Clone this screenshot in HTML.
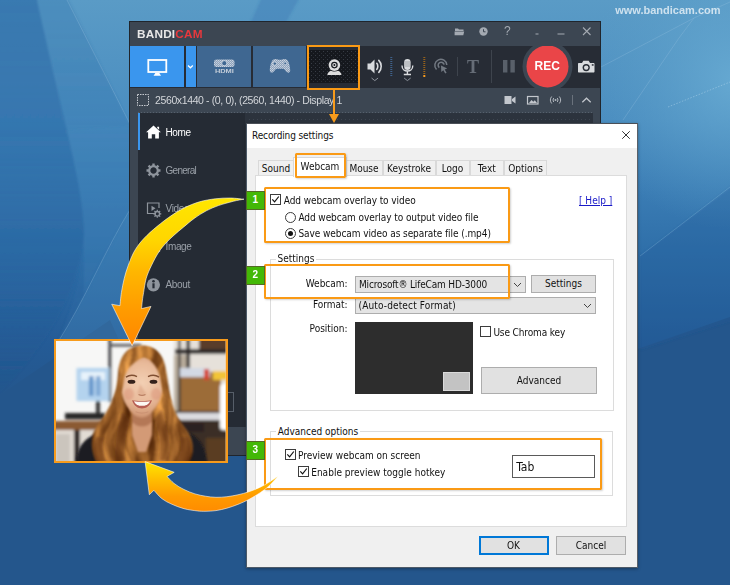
<!DOCTYPE html>
<html lang="en">
<head>
<meta charset="utf-8">
<title>Bandicam - Webcam overlay settings</title>
<style>
*{box-sizing:border-box;margin:0;padding:0}
html,body{width:730px;height:585px;overflow:hidden;background:#24568c}
body{position:relative;font-family:"Liberation Sans",sans-serif;font-size:10px;color:#000}
.abs{position:absolute}
#bg{position:absolute;left:0;top:0;width:730px;height:585px}
#wm{position:absolute;left:600px;top:4px;width:120.500px;text-align:right;font:bold 11px "Liberation Sans",sans-serif;color:rgba(255,255,255,.7);letter-spacing:0;white-space:nowrap}
/* ---------- Bandicam main window ---------- */
#win{position:absolute;left:129px;top:21px;width:472px;height:435px;background:#3c4652;border:1px solid #20252c;overflow:hidden}
#win .t{position:absolute;white-space:nowrap}
#logo{position:absolute;left:7.200px;top:6.300px;font:bold 10.500px "Liberation Sans",sans-serif;color:#e8e8e8;letter-spacing:.2px;transform-origin:0 50%;transform:scaleX(1.12);white-space:nowrap}
#logo b{color:#e8383d}
#tool{position:absolute;left:0;top:24px;width:471px;height:42px;background:#272c35}
.tb{position:absolute;top:0;height:41px}
#side{position:absolute;left:8px;top:91px;width:107px;height:314px;background:#252b34}
#cont{position:absolute;left:115px;top:91px;width:348px;height:314px;background:#2c333d}
.si{position:absolute;left:27.500px;margin-top:.5px;font-size:10px;color:#9aa0a8;white-space:nowrap;letter-spacing:-.35px}
/* ---------- dialog ---------- */
#dlg{position:absolute;left:246px;top:123px;width:392px;height:445px;background:#f0f0f0;border-top:1px solid #4a4f57;border-right:1px solid #5a6068;box-shadow:0 1px 3px rgba(0,0,0,.35),inset 1px 0 0 #4d5a68,inset 0 -1px 0 #4d5a68;font-family:"DejaVu Sans Condensed","Liberation Sans",sans-serif;font-size:10px;color:#111}
#dlg .t{position:absolute;white-space:nowrap;line-height:12px;margin-top:.6px}
#dtitle{position:absolute;left:0;top:0;width:391px;height:24px;background:#fff;box-shadow:inset 1px 0 0 #4d5a68}
.tab{position:absolute;top:36px;height:17px;border:1px solid #d9d9d9;border-bottom:none;background:#f0f0f0;text-align:center;line-height:15px;white-space:nowrap}
#pane{position:absolute;left:9px;top:51px;width:372px;height:352px;background:#fff;border:1px solid #dcdcdc}
.grp{position:absolute;border:1px solid #dcdcdc}
.cb{position:absolute;width:11px;height:11px;border:1px solid #3c3c3c;background:#fff}
.rb{position:absolute;width:11px;height:11px;border:1px solid #3c3c3c;border-radius:50%;background:#fff}
.btn{position:absolute;background:#e1e1e1;border:1px solid #adadad;text-align:center;white-space:nowrap}
.combo{position:absolute;background:#e4e4e4;border:1px solid #adadad}
.ob{position:absolute;border:2px solid #fa9a15;box-shadow:1px 1px 2px rgba(0,0,0,.18)}
.bd{position:absolute;width:18.500px;height:18.500px;background:#43b806;border:1px solid rgba(90,80,50,.75);color:#fff;font:bold 10px "Liberation Sans",sans-serif;text-align:center;line-height:16.500px}
</style>
</head>
<body>
<!-- background -->
<svg id="bg" width="730" height="585" viewBox="0 0 730 585">
<defs>
<linearGradient id="g0" gradientUnits="userSpaceOnUse" x1="0" y1="0" x2="0" y2="400">
<stop offset="0" stop-color="#5a9bc6"/><stop offset=".3" stop-color="#4a8dc0"/><stop offset=".48" stop-color="#3a7cb4"/><stop offset=".64" stop-color="#2e6ea8"/><stop offset=".86" stop-color="#245b96"/><stop offset="1" stop-color="#24568c"/>
</linearGradient>
<linearGradient id="gl" gradientUnits="userSpaceOnUse" x1="0" y1="0" x2="0" y2="400">
<stop offset="0" stop-color="#2a6aa6" stop-opacity=".68"/><stop offset=".35" stop-color="#2a69a5" stop-opacity=".6"/><stop offset=".7" stop-color="#26609c" stop-opacity=".4"/><stop offset="1" stop-color="#24568c" stop-opacity="0"/>
</linearGradient>
<linearGradient id="gm" gradientUnits="userSpaceOnUse" x1="0" y1="0" x2="0" y2="330">
<stop offset="0" stop-color="#3a7bb1" stop-opacity=".4"/><stop offset="1" stop-color="#2d6ca6" stop-opacity=".25"/>
</linearGradient>
<radialGradient id="g1" cx="735" cy="80" r="150" gradientUnits="userSpaceOnUse">
<stop offset="0" stop-color="#68abd3" stop-opacity=".9"/><stop offset="1" stop-color="#5a9dc8" stop-opacity="0"/>
</radialGradient>
<filter id="bb" x="-10%" y="-10%" width="120%" height="120%"><feGaussianBlur stdDeviation="1.200"/></filter>
</defs>
<rect width="730" height="585" fill="#24568c"/>
<path d="M0 0H730V317L640 348L601 362H129L110 320L0 395Z" fill="url(#g0)"/>
<rect x="560" y="0" width="170" height="240" fill="url(#g1)"/>
<g filter="url(#bb)">
<path d="M-5 -5H36C48 50 60 100 67 130C76 170 84 205 84 235C80 290 45 350 -5 398Z" fill="url(#gl)"/>
<path d="M36 -5H66L131 126V210C110 250 85 300 58 342C75 300 84 270 84 235C84 205 76 170 67 130C60 100 48 50 36 -5Z" fill="url(#gm)"/>
<path d="M640 256L735 184V320L640 350Z" fill="#1f5896" opacity=".28"/>
<path d="M58 342C85 300 105 250 131 206L131 345Z" fill="#4d8fc2" opacity=".32"/>
<path d="M84 235C84 205 76 170 67 130L131 126V206C115 232 100 262 84 295Z" fill="#4d8fc2" opacity=".18"/>
<path d="M262 -3L300 -3L285 24L250 24Z" fill="#3f80b8" opacity=".5"/>
</g>
<g fill="none" stroke="#9cc6e2" stroke-opacity=".35" stroke-width=".8">
<path d="M66 -2L131 126"/>
<path d="M601 67L694 18L730 2"/>
<path d="M623 120L679 38L694 18"/>
<path d="M640 256L730 187"/>
<path d="M58 342C85 300 105 250 131 208"/>
</g>
<path d="M668 107L730 82" stroke="#c4e0f2" stroke-opacity=".5" stroke-width=".8" stroke-dasharray="1.500 1.500" fill="none"/>
</svg>
<div id="wm">www.bandicam.com</div>

<!-- Bandicam window -->
<div id="win">
<div id="logo">BANDI<b>CAM</b></div>
<!-- title bar icons -->
<svg class="abs" style="left:320px;top:0" width="151" height="24" viewBox="320 0 151 24">
<g fill="#a4aab2">
<path d="M325 6.5h3l1 1h4.5v1.5h-8.5zM324.6 9.6h9.6l-.9 3.6h-8.7z"/>
<circle cx="353.500" cy="9.500" r="4.200"/>
</g>
<path d="M353.5 7.2v2.6h2" stroke="#3c4652" stroke-width="1" fill="none"/>
<g stroke="#a4aab2" stroke-width="1.1" fill="none">
<path d="M405.5 12h3M427.5 12h7"/>
<path d="M453 5.5l7.5 7.5M460.500 5.500l-7.500 7.500"/>
</g>
</svg>
<div class="t" style="left:374px;top:2px;font-size:12px;color:#a4aab2">?</div>
<div id="tool">
<div class="tb" style="left:0;width:54px;background:#3a96ee"></div>
<div class="tb" style="left:56px;width:10px;background:#3a96ee"></div>
<div class="tb" style="left:67px;width:54px;background:#3f6791"></div>
<div class="tb" style="left:123px;width:53px;background:#3f6791"></div>
<div class="tb" style="left:179px;top:4px;width:49px;height:33px;background:#15181d"></div>
<svg class="abs" style="left:0;top:0" width="471" height="42" viewBox="0 0 471 42">
<defs>
<pattern id="hd" width="2" height="2" patternUnits="userSpaceOnUse"><rect width="2" height="2" fill="#8da2bc"/><rect width="1" height="1" fill="#c9d3df"/><rect x="1" y="1" width="1" height="1" fill="#b7c4d4"/></pattern>
<pattern id="dots" width="4" height="4" patternUnits="userSpaceOnUse"><rect x="1" y="1" width="1" height="1" fill="#383d45"/><rect x="3" y="3" width="1" height="1" fill="#2a2e35"/></pattern>
</defs>
<rect x="179" y="4" width="49" height="33" fill="url(#dots)"/>
<!-- monitor -->
<rect x="18.300" y="14" width="18" height="12" fill="none" stroke="#fff" stroke-width="1.800"/>
<path d="M25.300 27h4l1.700 2.800h-7.400z" fill="#fff"/>
<!-- chevron -->
<path d="M58 19.600l2.400 2.200 2.400-2.200" fill="none" stroke="#fff" stroke-width="1.300"/>
<!-- hdmi -->
<g fill="#b4c0cf">
<rect x="84" y="13.500" width="20.500" height="7.500" rx="2.500" fill="url(#hd)"/>
</g>
<circle cx="94.300" cy="17.200" r="2.600" fill="#3f6791" stroke="#d5dde6" stroke-width=".9"/>
<text x="94.400" y="27.400" text-anchor="middle" font-family="Liberation Sans,sans-serif" font-weight="bold" font-size="5.600" fill="#c3cdd9" textLength="19" lengthAdjust="spacingAndGlyphs">HDMI</text>
<!-- gamepad -->
<path d="M143.600 13.400c1.800-.7 3.600-.5 4.800.3h3.200c1.200-.8 3-1 4.800-.3 2.300 1 3.600 6.500 3.800 10.600.1 2.400-1.700 3.300-3.200 2.300-1.300-.9-2.300-3.100-3.800-3.500h-6.400c-1.500.4-2.500 2.600-3.800 3.500-1.500 1-3.300.1-3.200-2.300.2-4.100 1.500-9.600 3.800-10.600z" fill="url(#hd)"/>
<circle cx="144.800" cy="17.600" r="1.700" fill="#3f6791" stroke="#c9d3df" stroke-width=".8"/>
<circle cx="155.200" cy="17.400" r="1.300" fill="#3f6791" stroke="#c9d3df" stroke-width=".7"/>
<!-- webcam -->
<circle cx="204.400" cy="19.100" r="5.800" fill="#dedede"/>
<circle cx="204.400" cy="19.100" r="3.300" fill="#15181d"/>
<circle cx="204.400" cy="19.100" r="2.100" fill="#dedede"/>
<circle cx="204.400" cy="19.100" r="1" fill="#15181d"/>
<path d="M197.300 28.900c.4-2.400 2-3.700 3.600-4.200 1.100 1 5.900 1 7 0 1.600.5 3.200 1.800 3.600 4.200z" fill="#dedede"/>
<!-- speaker -->
<g fill="#d9dbde">
<path d="M237.500 17.500h3l4-4v14l-4-4h-3z"/>
</g>
<g fill="none" stroke="#d9dbde" stroke-width="1.600" stroke-linecap="round">
<path d="M246.800 17.300c1.300 1.500 1.300 4.500 0 6"/>
<path d="M248.800 14.300c3.200 3 3.200 9 0 12"/>
</g>
<path d="M241.500 32l3.300 2.600 3.300-2.600" fill="none" stroke="#8d939b" stroke-width="1"/>
<path d="M261.300 11v20" stroke="#3f618a" stroke-width="2" stroke-dasharray="1 1"/>
<!-- mic -->
<rect x="274.200" y="13" width="6.400" height="11" rx="3.200" fill="#d9dbde"/>
<path d="M275 16h5M275 18h5M275 20h5" stroke="#8b9097" stroke-width=".7"/>
<path d="M272 19.500c0 7.400 10.800 7.400 10.800 0M277.400 25v3M273.800 28.500h7.200" fill="none" stroke="#d9dbde" stroke-width="1.400"/>
<path d="M274.100 32l3.300 2.600 3.300-2.600" fill="none" stroke="#8d939b" stroke-width="1"/>
<path d="M294.300 11v18" stroke="#96611a" stroke-width="2" stroke-dasharray="1 1"/>
<rect x="293.300" y="29" width="2" height="2" fill="#f59a1f"/>
<!-- cursor-click -->
<g fill="none" stroke="#727982" stroke-width="1.500">
<path d="M306.500 23.500a6 6 0 1 1 10.300-4.500"/>
<path d="M309.300 21.600a3 3 0 1 1 4.800-2.900"/>
</g>
<path d="M311 19.500l6.200 3-2.500 1 1.900 3.200-1.400.8-1.900-3.200-2 1.800z" fill="#727982"/>
<path d="M327.500 11v19" stroke="#3e444d" stroke-width="1"/>
<path d="M361.500 4v33" stroke="#3e444d" stroke-width="1"/>
<!-- pause -->
<rect x="373" y="14" width="4.400" height="12.500" fill="#59606a"/>
<rect x="380.400" y="14" width="4.400" height="12.500" fill="#59606a"/>
<!-- rec -->
<circle cx="417.500" cy="20.400" r="25" fill="#3c4652"/>
<circle cx="417.500" cy="20.400" r="21" fill="#ea4548"/>
<!-- camera -->
<path d="M449 17h3l1.300-2.300h5.400l1.300 2.300h3.500c.6 0 1 .4 1 1v7.500c0 .6-.4 1-1 1h-14.500c-.6 0-1-.4-1-1v-7.500c0-.6.400-1 1-1z" fill="#d9dbde"/>
<circle cx="456.200" cy="21.600" r="3.600" fill="#272c35"/>
<circle cx="456.200" cy="21.600" r="2.200" fill="#d9dbde"/>
<rect x="461.800" y="18.200" width="1.800" height="1.500" fill="#272c35"/>
</svg>
<div class="t" style="left:337px;top:12px;font:bold 18px 'Liberation Serif',serif;color:#666d77;line-height:18px">T</div>
<div class="t" style="left:404.500px;top:13px;font:bold 12px 'Liberation Sans',sans-serif;color:#fff;line-height:14px;letter-spacing:0">REC</div>
</div>
<!-- status bar -->
<svg class="abs" style="left:0;top:66px" width="471" height="25" viewBox="0 0 471 25">
<rect x="7.500" y="6.500" width="11" height="11" fill="none" stroke="#c6cad0" stroke-width="1" stroke-dasharray="1.500 1"/>
<g fill="#c3c7cd">
<path d="M374.500 8h7v8h-7zM382 11l3.500-2.500v7l-3.500-2.500z"/>
</g>
<rect x="397.500" y="8.500" width="10.500" height="7.500" fill="none" stroke="#c3c7cd" stroke-width="1.200"/>
<path d="M399 15l2.500-3 1.800 1.800 1.500-1.500 2.200 2.700z" fill="#c3c7cd"/>
<g fill="none" stroke="#b3b8bf" stroke-width="1">
<path d="M421.700 8.500c-1.800 2-1.800 5 0 7M423.800 10c-1 1.200-1 2.800 0 4M429.300 8.500c1.800 2 1.800 5 0 7M427.200 10c1 1.200 1 2.800 0 4"/>
<path d="M442.500 7v10" stroke="#6a727c"/>
<path d="M452.300 14.200l4.200-4 4.200 4" stroke="#c3c7cd" stroke-width="1.200"/>
</g>
<circle cx="425.500" cy="12" r="1" fill="#b3b8bf"/>
</svg>
<div class="t" style="left:25px;top:71px;font-size:10.500px;line-height:14px;color:#d3d6da;letter-spacing:-.38px">2560x1440 - (0, 0), (2560, 1440) - Display 1</div>
<div style="position:absolute;left:8px;top:90px;width:455px;height:1px;background:repeating-linear-gradient(90deg,#56606c 0 1px,transparent 1px 3px)"></div>
<div id="cont">
<div style="position:absolute;left:4px;top:6px;width:345px;height:1px;background:repeating-linear-gradient(90deg,#3d4550 0 1px,transparent 1px 4px)"></div>
</div>
<div id="side">
<div style="position:absolute;left:0;top:0;width:2px;height:37px;background:#3a96ee"></div>
<svg class="abs" style="left:0;top:0" width="107" height="314" viewBox="0 0 107 314">
<!-- home -->
<path d="M15.500 12.600l7.400 6.700h-2v6.300h-3.700v-4.300h-3.400v4.300h-3.700v-6.300h-2zM19.200 13.800h1.900v3l-1.900-1.700z" fill="#fff"/>
<!-- gear -->
<g transform="translate(15.500 57.500)">
<circle r="4.300" fill="none" stroke="#8e949c" stroke-width="2.200"/>
<g stroke="#8e949c" stroke-width="2.400">
<path d="M0-7v2.500M0 7v-2.500M-7 0h2.500M7 0h-2.500M-4.950-4.950l1.800 1.800M4.950 4.950l-1.800-1.800M-4.950 4.950l1.800-1.800M4.950-4.950l-1.800 1.800"/>
</g>
</g>
<!-- video -->
<g fill="none" stroke="#8e949c" stroke-width="1.200">
<path d="M18 100.500h-8.500v-10.500h11.500v5"/>
</g>
<path d="M13.500 92.700l4 2.600-4 2.600z" fill="#8e949c"/>
<g transform="translate(19.300 100.800)">
<circle r="2.300" fill="none" stroke="#8e949c" stroke-width="1.400"/>
<path d="M0-4v1.500M0 4v-1.500M-4 0h1.500M4 0h-1.500M-2.830-2.830l1.100 1.100M2.830 2.830l-1.100-1.100M-2.830 2.830l1.100-1.100M2.830-2.830l-1.100 1.100" stroke="#8e949c" stroke-width="1.300"/>
</g>
<!-- image -->
<rect x="9.500" y="128.500" width="12" height="10" fill="none" stroke="#8e949c" stroke-width="1.200"/>
<path d="M11 137l3-4 2 2.300 1.500-1.500 2.500 3.200z" fill="#8e949c"/>
<!-- about -->
<circle cx="15.400" cy="171.800" r="6.600" fill="#8e949c"/>
<rect x="14.400" y="170.300" width="2.200" height="5" fill="#252b34"/>
<circle cx="15.500" cy="168.200" r="1.300" fill="#252b34"/>
<rect x="83.500" y="279.500" width="12" height="19" fill="none" stroke="#565e69" stroke-width="1"/>
</svg>
<div class="si" style="top:13px;color:#fff">Home</div>
<div class="si" style="top:51px;letter-spacing:-.72px">General</div>
<div class="si" style="top:89px">Video</div>
<div class="si" style="top:127px">Image</div>
<div class="si" style="top:165px">About</div>
</div>
</div>

<!-- dialog -->
<div id="dlg">
<div id="dtitle"></div>
<div class="t" style="left:6px;top:5.300px;font-size:10px;letter-spacing:-.13px">Recording settings</div>
<svg class="abs" style="left:374.500px;top:6px" width="10" height="10" viewBox="0 0 12 12"><path d="M1.500 1.500l9 9M10.500 1.500l-9 9" stroke="#222" stroke-width="1.100" fill="none"/></svg>
<div class="tab" style="left:12px;width:36px">Sound</div>
<div class="tab" style="left:99.500px;width:37px">Mouse</div>
<div class="tab" style="left:136.500px;width:53px">Keystroke</div>
<div class="tab" style="left:189.500px;width:34px">Logo</div>
<div class="tab" style="left:223.500px;width:34.500px">Text</div>
<div class="tab" style="left:258px;width:43px">Options</div>
<div id="pane"></div>
<div class="tab" style="left:47px;width:54px;top:33px;height:20px;background:#fff;line-height:17px">Webcam</div>
<div class="cb" style="left:24px;top:70px"><svg width="9" height="9" viewBox="0 0 9 9" style="position:absolute;left:0;top:0"><path d="M1.300 4.400l2.300 2.400 4.200-5.300" fill="none" stroke="#111" stroke-width="1.200"/></svg></div>
<div class="t" style="left:37.8px;top:70.6px;letter-spacing:-.07px">Add webcam overlay to video</div>
<div class="rb" style="left:39px;top:87.5px"></div>
<div class="t" style="left:52.4px;top:87px;letter-spacing:-.07px">Add webcam overlay to output video file</div>
<div class="rb" style="left:39px;top:103.5px"><i style="position:absolute;left:2px;top:2px;width:5px;height:5px;border-radius:50%;background:#111"></i></div>
<div class="t" style="left:52.4px;top:103px;letter-spacing:-.07px">Save webcam video as separate file (.mp4)</div>
<div class="t" style="left:333px;top:70.4px;color:#1a1ac8;text-decoration:underline">[ Help ]</div>
<div class="grp" style="left:24px;top:135px;width:344px;height:152px"></div>
<div class="t" style="left:29.5px;top:128.6px;background:#fff;padding:0 2px">Settings</div>
<div class="t" style="right:289.4px;top:153px;">Webcam:</div>
<div class="combo" style="left:109px;top:151.5px;width:171px;height:17.500px"></div>
<div class="t" style="left:113px;top:154.700px;letter-spacing:-.16px">Microsoft® LifeCam HD-3000</div>
<svg class="abs" style="left:266.5px;top:157.5px" width="9" height="6" viewBox="0 0 9 6"><path d="M1 1l3.500 3.500 3.500-3.500" fill="none" stroke="#444" stroke-width="1"/></svg>
<div class="btn" style="left:285px;top:151px;width:65px;height:18px;line-height:16px">Settings</div>
<div class="t" style="right:289.4px;top:174.2px;">Format:</div>
<div class="combo" style="left:109px;top:172.5px;width:241px;height:17.500px"></div>
<div class="t" style="left:112.500px;top:175.200px;letter-spacing:.14px">(Auto-detect Format)</div>
<svg class="abs" style="left:337px;top:179px" width="9" height="6" viewBox="0 0 9 6"><path d="M1 1l3.500 3.500 3.500-3.500" fill="none" stroke="#444" stroke-width="1"/></svg>
<div class="t" style="right:289.4px;top:198.6px;">Position:</div>
<div class="abs" style="left:109px;top:198px;width:117.500px;height:72px;background:#2d2d2d"><div class="abs" style="left:87.500px;top:49.500px;width:27px;height:19.500px;background:#c3c3c3;border:1px solid #dadada"></div></div>
<div class="cb" style="left:234px;top:202px"></div>
<div class="t" style="left:247.400px;top:202.200px;letter-spacing:-.12px">Use Chroma key</div>
<div class="btn" style="left:235px;top:243px;width:116px;height:26.500px;line-height:25px">Advanced</div>
<div class="grp" style="left:24px;top:307px;width:343px;height:65px"></div>
<div class="t" style="left:29.8px;top:301px;background:#fff;padding:0 2px">Advanced options</div>
<div class="cb" style="left:39px;top:325px"><svg width="9" height="9" viewBox="0 0 9 9" style="position:absolute;left:0;top:0"><path d="M1.300 4.400l2.300 2.400 4.200-5.300" fill="none" stroke="#111" stroke-width="1.200"/></svg></div>
<div class="t" style="left:52px;top:325.2px;letter-spacing:0">Preview webcam on screen</div>
<div class="cb" style="left:52px;top:342px"><svg width="9" height="9" viewBox="0 0 9 9" style="position:absolute;left:0;top:0"><path d="M1.300 4.400l2.300 2.400 4.200-5.300" fill="none" stroke="#111" stroke-width="1.200"/></svg></div>
<div class="t" style="left:65.2px;top:342.2px;letter-spacing:.02px">Enable preview toggle hotkey</div>
<div class="abs" style="left:266px;top:331.3px;width:82.500px;height:23px;background:#fff;border:1px solid #5a5a5a"></div>
<div class="t" style="left:270.2px;top:336px;font-size:12px">Tab</div>
<div class="btn" style="left:232.5px;top:412.3px;width:70px;height:19px;line-height:15px;border:2px solid #0078d7">OK</div>
<div class="btn" style="left:310px;top:412.3px;width:70px;height:19px;line-height:17px">Cancel</div>
</div>
<!-- webcam preview photo -->
<div class="abs" style="left:54px;top:339px;width:173.500px;height:124px;background:#f79b1c"></div>
<svg class="abs" style="left:56px;top:341px" width="169.500" height="120" viewBox="0 0 169.500 120">
<defs>
<filter id="b3" x="-20%" y="-20%" width="140%" height="140%"><feGaussianBlur stdDeviation="1.800"/></filter>
<filter id="b1" x="-20%" y="-20%" width="140%" height="140%"><feGaussianBlur stdDeviation=".9"/></filter>
<filter id="b05" x="-20%" y="-20%" width="140%" height="140%"><feGaussianBlur stdDeviation=".7"/></filter>
<filter id="hairtex" x="-5%" y="-5%" width="110%" height="110%" color-interpolation-filters="sRGB">
<feTurbulence type="fractalNoise" baseFrequency=".1 .02" numOctaves="3" seed="7" result="n"/>
<feColorMatrix in="n" type="matrix" values="1 0 0 0 .1  .8 0 0 0 -.03  .45 0 0 0 -.07  0 0 0 0 1" result="c"/>
<feTurbulence type="fractalNoise" baseFrequency=".018 .035" numOctaves="1" seed="4" result="w"/>
<feDisplacementMap in="c" in2="w" scale="22" xChannelSelector="R" yChannelSelector="G" result="cw"/>
<feComposite in="cw" in2="SourceAlpha" operator="in" result="h"/>
<feGaussianBlur in="h" stdDeviation=".9"/>
</filter>
<radialGradient id="skin" cx="86" cy="42" r="34" gradientUnits="userSpaceOnUse"><stop offset="0" stop-color="#f3d0b4"/><stop offset=".6" stop-color="#e8b999"/><stop offset="1" stop-color="#cf9572"/></radialGradient>
<clipPath id="pc"><rect width="169.500" height="120"/></clipPath>
</defs>
<g clip-path="url(#pc)">
<rect width="170" height="120" fill="#f7f7f6"/>
<g filter="url(#b3)">
<rect x="118" y="-5" width="57" height="130" fill="#e6e1da"/>
<rect x="118" y="14" width="14" height="56" fill="#b9ad9c"/>
<rect x="143" y="-5" width="32" height="15" fill="#5a3e2a"/>
<rect x="119" y="8" width="55" height="5" fill="#2f2b29"/>
<rect x="130.500" y="-5" width="3.500" height="100" fill="#2a2726"/>
<rect x="124" y="31" width="41" height="39" fill="#9c6c38"/>
<rect x="122" y="-5" width="2.500" height="100" fill="#3a3634"/>
<rect x="124" y="27" width="30" height="9" fill="#d3d9e4"/>
<rect x="148" y="28" width="5" height="11" fill="#d43f2c"/>
<rect x="157" y="30" width="16" height="9" fill="#f2c438"/>
<rect x="118" y="70" width="57" height="55" fill="#3a2f26"/>
<rect x="120" y="72" width="44" height="7" fill="#dcdce0"/>
<rect x="118" y="82" width="30" height="9" fill="#2a2420"/>
<rect x="150" y="97" width="26" height="28" fill="#5a3d24"/>
<rect x="164" y="43" width="10" height="46" rx="3" fill="#fff"/>
<rect x="52.500" y="-5" width="2.600" height="66" fill="#2f2f31"/>
<rect x="53" y="3" width="32" height="2.500" fill="#4c4c50"/>
<rect x="20.500" y="27" width="33" height="33" fill="#b4d3ee"/>
<rect x="25" y="31" width="24" height="8" fill="#e8f3fb"/>
<rect x="33" y="35" width="4.500" height="20" fill="#6596cb"/>
<rect x="40" y="35" width="4.500" height="20" fill="#7fa9d6"/>
<rect x="40" y="60" width="4" height="13" fill="#333"/>
<rect x="9" y="72" width="40" height="6.500" fill="#262628"/>
<rect x="-5" y="80" width="50" height="9" fill="#8b5a30"/>
<rect x="-5" y="89" width="50" height="36" fill="#e2dcd4"/>
<rect x="18" y="89" width="6" height="36" fill="#2a2420"/>
<rect x="0" y="93" width="14" height="30" fill="#cbc5bd"/>
</g>
<g filter="url(#b1)">
<path d="M20 122c1-14 6-24 22-30l20-6h48l20 5c14 5 19 15 21 31z" fill="#1a1a20"/>
<path d="M77 122l3-12h13l3 12z" fill="#f4f2f0"/>
</g>
<!-- hair back -->
<path filter="url(#hairtex)" d="M86 4.500C71 4.500 63.500 15 62 32C61 46 59 56 52 68C47 78 37 86 36 98C35 106 37 114 41 122L133 122C137 115 138 108 136 100C133 88 123 82 119 70C114 58 113 46 110.500 32C108.500 15 101 4.500 86 4.500Z" fill="#b3682d"/>
<g filter="url(#b1)">
<!-- neck -->
<path d="M76 68h20v26l-6 17h-8l-6-17z" fill="#d39a76"/>
<path d="M76 69c6 10 14 10 20 0v12c-6 6-14 6-20 0z" fill="#a96c4c" opacity=".75"/>
<!-- face -->
<path d="M86 16c-13 0-21 10-21 26 0 13 4 23 10 29 6 7 15 7 21 0 6-6 11-16 11-29 0-16-8-26-21-26z" fill="url(#skin)"/>
<ellipse cx="73" cy="53" rx="5" ry="6" fill="#d88a70" opacity=".4"/>
<ellipse cx="100" cy="53" rx="5" ry="6" fill="#d88a70" opacity=".4"/>
<path d="M84 43c-1 4-2.500 7.500-2.500 10 2 1.600 7 1.600 9 0" fill="#d9a384" opacity=".55"/>
</g>
<!-- hair front -->
<path filter="url(#hairtex)" d="M89 6.500C75 6.500 65.500 15.500 64 33.500C63.200 43.500 61 52 56 61C62 57 66.500 50 67.500 42C68.500 32 73 23 88 15.500C97 19.500 102.500 27.500 104.500 38.500C105.500 47.500 109 56 116 62C111 53 109.500 44 108.500 34C106.500 17 101 6.500 89 6.500Z" fill="#b0652a"/>
<path filter="url(#hairtex)" d="M64 58c-1 12-8 22-12 32-3 8-3 18 0 30h22c-4-8-6-16-4-24 2-10 4-18 2-28zM108 56c2 14 9 24 13 34 3 8 2 18-1 30h-21c4-8 6-17 4-25-2-9-4-17-1-27z" fill="#b0652a"/>
<g filter="url(#b3)" opacity=".5"><path d="M66 70c-2 14-8 24-6 50h10c-3-14 0-28 4-40zM106 68c3 16 10 26 7 52h-10c3-14 0-28-5-42z" fill="#5a2c10"/><path d="M40 96c-3 8-3 16 0 26h12c-5-8-6-16-4-26zM132 96c3 8 3 16 0 26h-12c5-8 6-16 4-26z" fill="#5a2c10"/></g>
<g filter="url(#b05)">
<ellipse cx="75.500" cy="40.800" rx="3.900" ry="2" fill="#34201a"/>
<ellipse cx="97.500" cy="40.800" rx="3.900" ry="2" fill="#34201a"/>
<path d="M70 36.200c3-2 7.500-2.200 11-.6M92 35.600c3.500-1.600 8-1.400 11 .6" stroke="#805033" stroke-width="1.500" fill="none"/>
<path d="M82.500 53.500c2 1 5 1 7 0" stroke="#b97f62" stroke-width="1.200" fill="none"/>
<path d="M76 59.300c3.500 1 16.500 1 20 0-2 5.800-6 8.200-10 8.200s-8-2.400-10-8.200z" fill="#b65d52"/>
<path d="M78 60.200c4 .8 12 .8 16 0-1.500 3.600-4.500 4.600-8 4.600s-6.500-1-8-4.600z" fill="#fcf8f4"/>
<path d="M79.500 70.800c4 1.600 9 1.600 13 0" stroke="#c48a6c" stroke-width="1.200" fill="none" opacity=".6"/>
</g>
</g>
</svg>
<!-- highlight boxes -->
<div class="ob" style="left:307px;top:45px;width:53px;height:45px;box-shadow:none"></div>
<div class="abs" style="left:333px;top:90px;width:2px;height:25px;background:#f79b1c"></div>
<div class="abs" style="left:329px;top:114px;width:0;height:0;border-left:5px solid transparent;border-right:5px solid transparent;border-top:9.500px solid #f79b1c"></div>
<div class="ob" style="left:295px;top:153px;width:51px;height:24.500px;border-radius:1.500px"></div>
<div class="ob" style="left:264px;top:187px;width:245.500px;height:55.500px;border-radius:1.500px"></div>
<div class="ob" style="left:264px;top:264px;width:245.500px;height:34.700px;border-radius:1.500px"></div>
<div class="ob" style="left:264px;top:438px;width:338px;height:52.300px;border-radius:1.500px"></div>
<div class="bd" style="left:246px;top:191px">1</div>
<div class="bd" style="left:246px;top:266px">2</div>
<div class="bd" style="left:246px;top:441px">3</div>
<!-- big arrows -->
<svg class="abs" style="left:0;top:0;pointer-events:none" width="730" height="585" viewBox="0 0 730 585">
<defs>
<linearGradient id="ga1" gradientUnits="userSpaceOnUse" x1="0" y1="199" x2="0" y2="345"><stop offset="0" stop-color="#ffe600"/><stop offset=".28" stop-color="#ffd600"/><stop offset=".5" stop-color="#ffb600"/><stop offset=".75" stop-color="#ff9c00"/><stop offset="1" stop-color="#ff8600"/></linearGradient>
<linearGradient id="ga2" gradientUnits="userSpaceOnUse" x1="0" y1="462" x2="0" y2="511"><stop offset="0" stop-color="#ffe600"/><stop offset=".35" stop-color="#ffbe00"/><stop offset=".7" stop-color="#ff9a00"/><stop offset="1" stop-color="#ff8c00"/></linearGradient>
</defs>
<path d="M244.0 199.2C241.7 199.0 235.2 198.1 230.4 198.0C225.6 197.9 220.5 198.2 215.3 198.8C210.2 199.4 204.7 200.3 199.5 201.8C194.3 203.3 189.2 205.4 184.0 208.0C178.8 210.6 173.7 213.9 168.6 217.5C163.5 221.1 157.8 225.7 153.3 229.6C148.8 233.5 145.1 237.0 141.8 240.8C138.5 244.6 135.9 248.4 133.6 252.6C131.3 256.8 129.7 261.5 128.1 265.8C126.5 270.1 125.3 274.1 124.2 278.6C123.1 283.1 122.1 288.1 121.4 292.6C120.7 297.1 120.2 303.5 120.0 305.7L111.7 304.2L132.1 345.7L151 306.4L141.5 308.6C141.7 307.2 142.1 302.7 142.4 300.0C142.8 297.3 143.0 296.2 143.6 292.6C144.2 289.0 144.9 283.0 146.2 278.4C147.5 273.8 149.5 269.6 151.6 265.2C153.7 260.8 156.4 255.7 158.8 252.0C161.2 248.3 163.5 245.8 166.0 243.0C168.5 240.2 171.1 237.9 174.0 235.2C176.9 232.5 180.3 229.8 183.7 227.0C187.1 224.2 190.4 221.1 194.2 218.4C198.0 215.7 202.3 212.9 206.3 210.8C210.3 208.7 213.9 207.2 218.4 205.6C222.9 204.0 229.1 202.4 233.4 201.3C237.7 200.2 242.2 199.5 244.0 199.2Z" fill="url(#ga1)" stroke="rgba(255,255,255,.7)" stroke-width=".8"/>
<path d="M145.1 461.6L174.2 472.3L167 476.4C168.2 477.6 171.4 481.3 174.2 483.5C177.0 485.7 180.5 487.8 184.0 489.5C187.5 491.2 191.4 492.8 195.0 493.9C198.6 495.0 202.0 495.6 205.5 496.2C209.0 496.8 212.4 497.2 216.0 497.3C219.6 497.4 223.2 497.1 226.9 496.7C230.6 496.3 234.2 495.6 237.9 494.8C241.6 494.0 245.2 493.0 248.8 491.8C252.5 490.6 256.5 488.9 259.8 487.4C263.1 485.8 265.5 484.4 268.6 482.5C271.7 480.6 276.6 477.0 278.2 475.9C276.6 477.6 271.7 483.5 268.6 486.3C265.5 489.1 263.1 490.7 259.8 492.9C256.5 495.1 252.5 497.6 248.8 499.5C245.2 501.4 241.6 502.9 237.9 504.4C234.2 505.8 230.6 507.2 226.9 508.2C223.2 509.2 219.5 510.1 216.0 510.6C212.5 511.1 209.1 511.2 206.0 511.3C202.9 511.4 200.9 511.3 197.2 510.9C193.5 510.5 188.2 509.8 184.0 508.7C179.8 507.6 175.7 505.9 172.0 504.3C168.3 502.7 165.1 501.1 162.1 498.8C159.1 496.5 155.3 491.7 153.9 490.3L149.3 494.7Z" fill="url(#ga2)" stroke="rgba(255,255,255,.7)" stroke-width=".8"/>
</svg>
</body>
</html>
